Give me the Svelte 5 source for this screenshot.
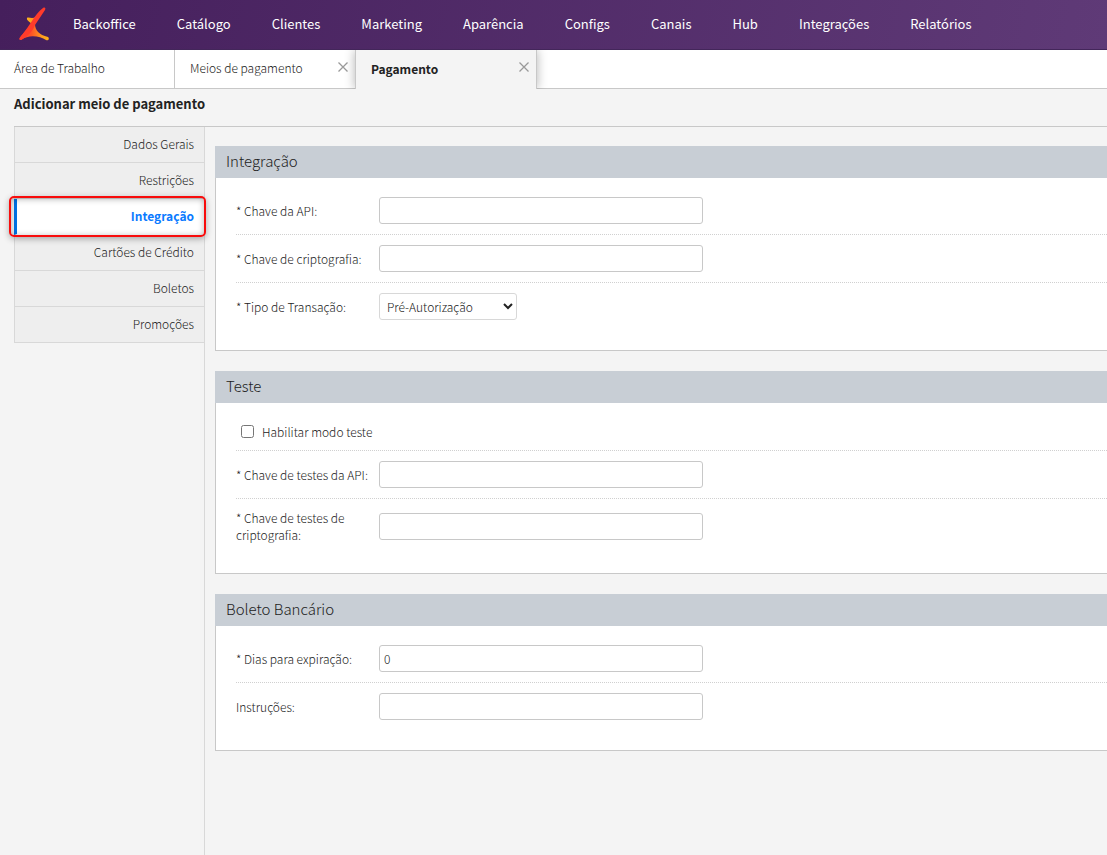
<script>
    let menu = ['Backoffice', 'Catálogo', 'Clientes', 'Marketing', 'Aparência', 'Configs', 'Canais', 'Hub', 'Integrações', 'Relatórios'];
    let tabs = [
        { label: 'Área de Trabalho', closable: false },
        { label: 'Meios de pagamento', closable: true },
        { label: 'Pagamento', closable: true }
    ];
    let activeTab = 'Pagamento';
    let sections = ['Dados Gerais', 'Restrições', 'Integração', 'Cartões de Crédito', 'Boletos', 'Promoções'];
    let activeSection = 'Integração';
    let panels = [
        {
            title: 'Integração',
            fields: [
                { id: 'api-key', label: '* Chave da API:', type: 'text', value: '' },
                { id: 'crypto-key', label: '* Chave de criptografia:', type: 'text', value: '' },
                { id: 'transaction', label: '* Tipo de Transação:', type: 'select', value: 'Pré-Autorização', options: ['Pré-Autorização', 'Captura'] }
            ]
        },
        {
            title: 'Teste',
            fields: [
                { id: 'test-mode', label: 'Habilitar modo teste', type: 'checkbox', value: false },
                { id: 'test-api-key', label: '* Chave de testes da API:', type: 'text', value: '' },
                { id: 'test-crypto-key', label: '* Chave de testes de criptografia:', type: 'text', value: '' }
            ]
        },
        {
            title: 'Boleto Bancário',
            fields: [
                { id: 'expiration', label: '* Dias para expiração:', type: 'text', value: '0' },
                { id: 'instructions', label: 'Instruções:', type: 'text', value: '' }
            ]
        }
    ];

    const selectTab = tab => () => {
        activeTab = tab.label;
    }
    const closeTab = tab => () => {
        tabs = tabs.filter(t => t !== tab);
    }
    const selectSection = section => () => {
        activeSection = section;
    }
</script>

<div class="page">
    <header>
        <a class="logo" href="#home" aria-label="Início">
            <svg width="30" height="34" viewBox="0 0 30 34">
                <defs>
                    <linearGradient id="flame" x1="0" y1="0" x2="1" y2="0">
                        <stop offset="0" stop-color="#ff3a2a" />
                        <stop offset=".4" stop-color="#ff5226" />
                        <stop offset=".75" stop-color="#ff9a1e" />
                        <stop offset="1" stop-color="#ffb31a" />
                    </linearGradient>
                    <linearGradient id="wing" x1="0" y1="0" x2="1" y2="0">
                        <stop offset="0" stop-color="#ffb81c" />
                        <stop offset="1" stop-color="#ff6a22" />
                    </linearGradient>
                </defs>
                <path fill="url(#wing)" d="M8 10C9 9 11 10 13 10C16 10 18 8 21 6L13 18C13 14 7 13 8 10Z" />
                <path fill="url(#flame)" d="M12 17L16 16C16 22 20 27 29 29C31 31 29 33 27 32C21 28 10 26 2 32C-1 32 1 29 3 27C6 23 9 20 12 17Z" />
                <path fill="#ff3b2b" d="M24 0C26 -1 27 0 26 2L16 17C14 23 8 29 2 32C-1 32 1 29 3 27C7 22 10 17 13 13C16 8 20 3 24 0Z" />
            </svg>
        </a>
        <nav>
            {#each menu as item}
                <a href="#{item}">{item}</a>
            {/each}
        </nav>
    </header>

    <div class="tabs">
        {#each tabs as tab}
            <div class="tab" class:closable={tab.closable} class:active={tab.label === activeTab}>
                <button class="name" on:click={selectTab(tab)}>{tab.label}</button>
                {#if tab.closable}
                    <button class="close" aria-label="Fechar" on:click={closeTab(tab)}>
                        <svg width="10" height="10" viewBox="0 0 10 10">
                            <path d="M0.5 0.5L9.5 9.5M9.5 0.5L0.5 9.5" stroke="#999" stroke-width="1.3" />
                        </svg>
                    </button>
                {/if}
            </div>
        {/each}
    </div>

    <h1>Adicionar meio de pagamento</h1>

    <div class="content">
        <ul class="sections">
            {#each sections as section}
                <li class:active={section === activeSection}>
                    <button on:click={selectSection(section)}>{section}</button>
                </li>
            {/each}
        </ul>

        <main>
            {#each panels as panel}
                <section>
                    <h2>{panel.title}</h2>
                    <div class="fields">
                        {#each panel.fields as field}
                            {#if field.type === 'checkbox'}
                                <div class="row check">
                                    <input id={field.id} type="checkbox" bind:checked={field.value} />
                                    <label for={field.id}>{field.label}</label>
                                </div>
                            {:else}
                                <div class="row">
                                    <label for={field.id}>{field.label}</label>
                                    {#if field.type === 'select'}
                                        <select id={field.id} bind:value={field.value}>
                                            {#each field.options as option}
                                                <option value={option}>{option}</option>
                                            {/each}
                                        </select>
                                    {:else}
                                        <input id={field.id} type="text" bind:value={field.value} />
                                    {/if}
                                </div>
                            {/if}
                        {/each}
                    </div>
                </section>
            {/each}
        </main>
    </div>
</div>

<style>
:global(body) {
    margin: 0;
    background-color: #f4f4f4;
}
.page {
    --line: #c8c8c8;
    display: flex;
    flex-direction: column;
    min-height: 100vh;
    overflow-x: hidden;
    color: #222;
    font-family: "Source Sans Pro", "Noto Sans CJK SC", "Noto Sans", sans-serif;
    font-size: 12px;
    font-weight: 300;
    line-height: 17px;
}
button, input, select {
    font: inherit;
    color: inherit;
    box-sizing: border-box;
}
button {
    border: none;
    background: transparent;
    cursor: pointer;
}
header {
    display: flex;
    align-items: center;
    height: 50px;
    box-sizing: border-box;
    border-bottom: solid 1px #43265a;
    background: linear-gradient(100deg, #451f5c, #5f3a77);
}
.logo {
    display: flex;
    margin: 0 24px 0 19px;
}
.logo svg {
    overflow: visible;
}
nav {
    display: flex;
    gap: 41px;
    padding-bottom: 2px;
}
nav a {
    color: #fff;
    font-size: 13px;
    line-height: 20px;
    font-weight: 400;
    text-decoration: none;
}
.tabs {
    display: flex;
    height: 38px;
    border-bottom: solid 1px var(--line);
    background-color: #fff;
}
.tab {
    display: flex;
    align-items: center;
    justify-content: space-between;
    box-sizing: border-box;
    width: 175px;
    padding: 0 7px 0 14px;
    border-right: solid 1px var(--line);
}
.tab.closable {
    width: 180px;
    padding-left: 15px;
    border-right: none;
}
.tab.active {
    height: 39px;
    width: 182px;
    border-left: solid 1px var(--line);
    border-right: solid 1px var(--line);
    background-color: #f4f4f4;
    box-shadow: 0 0 10px rgba(0, 0, 0, .3);
    clip-path: inset(0 -12px 0 -12px);
    font-weight: bold;
}
.name {
    padding: 0 0 3px;
}
.close {
    display: flex;
    padding: 0 0 5px;
}
h1 {
    margin: 0 0 0 14px;
    padding: 5px 0 12px;
    border-bottom: solid 1px var(--line);
    font-size: 13px;
    line-height: 20px;
}
.content {
    display: flex;
    flex: 1;
    padding-left: 14px;
}
.sections {
    flex: 0 0 190px;
    margin: 0;
    padding: 0;
    border-right: solid 1px #d8d8d8;
    list-style: none;
}
.sections li {
    border-left: solid 1px #d8d8d8;
    border-bottom: solid 1px #d8d8d8;
    background-color: #eee;
}
.sections button {
    display: block;
    width: 100%;
    height: 35px;
    padding: 0 10px 2px;
    text-align: right;
}
.sections li.active {
    position: relative;
    border-left: solid 3px #0073e6;
    border-bottom-color: #fff;
    background-color: #fff;
    color: #0a7aff;
    font-weight: bold;
}
/* red frame that hangs over the neighbouring items */
.sections li.active:after {
    position: absolute;
    inset: -3px -2px -3px -8px;
    border: solid 2px #f80c0c;
    border-radius: 5px;
    box-shadow: 0 2px 6px rgba(0, 0, 0, .3), inset 0 1px 6px rgba(0, 0, 0, .3);
    content: "";
    pointer-events: none;
}
main {
    flex: 1;
    min-width: 0;
    padding: 19px 0 20px 10px;
}
section {
    margin-bottom: 20px;
    border: solid 1px var(--line);
    border-top: none;
    border-right: none;
    background-color: #fff;
}
h2 {
    margin: 0 0 0 -1px;
    padding: 3px 11px 5px;
    background-color: #c8ced5;
    font-size: 15px;
    font-weight: 300;
    line-height: 24px;
}
.fields {
    padding: 9px 0 20px 20px;
}
.row {
    display: flex;
    align-items: center;
    padding: 10px 0;
    border-bottom: dotted 1px #d0d0d0;
}
.row:last-child {
    border-bottom: none;
}
.row label {
    flex: 0 0 143px;
}
.row.check {
    height: 18px;
}
.row.check label {
    flex: none;
}
input[type="checkbox"] {
    width: 13px;
    height: 13px;
    margin: 0 8px 0 5px;
}
input[type="text"], select {
    height: 27px;
    border: solid 1px var(--line);
    border-radius: 3px;
    background-color: #fff;
}
input[type="text"] {
    width: 324px;
    padding: 0 4px;
}
select {
    width: 138px;
    padding: 0 3px;
    border-color: #d8d8d8;
}
</style>
